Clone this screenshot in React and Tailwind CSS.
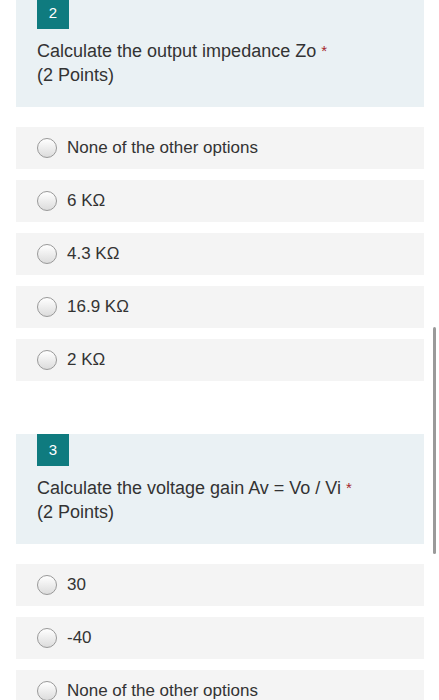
import React from 'react';

const questions = [
  {
    number: 2,
    title: 'Calculate the output impedance Zo',
    points: '(2 Points)',
    options: ['None of the other options', '6 KΩ', '4.3 KΩ', '16.9 KΩ', '2 KΩ'],
  },
  {
    number: 3,
    title: 'Calculate the voltage gain Av = Vo / Vi',
    points: '(2 Points)',
    options: ['30', '-40', 'None of the other options'],
  },
];

const Radio = () => (
  <span className="w-5 h-5 shrink-0 rounded-full border border-[#999] bg-gradient-to-b from-white to-[#dcdcdc]" />
);

const Question = ({ q }) => (
  <div>
    <div className="bg-[#eaf1f4] h-[110px] px-[21px]">
      <div className="w-8 h-8 bg-[#0f7b7f] text-white text-[15px] flex items-center justify-center">
        {q.number}
      </div>
      <div className="mt-[10px] text-[18px] leading-6 text-[#333]">
        <div>
          {q.title} <span className="text-[#a4262c] text-[15px] align-top">*</span>
        </div>
        <div>{q.points}</div>
      </div>
    </div>
    <div className="mt-5 flex flex-col gap-[11px]">
      {q.options.map((opt) => (
        <div key={opt} className="h-[42px] bg-[#f4f4f4] flex items-center gap-[10px] px-[21px]">
          <Radio />
          <span className="text-[17px] text-[#333]">{opt}</span>
        </div>
      ))}
    </div>
  </div>
);

export default function App() {
  return (
    <div
      className="relative w-[439px] h-[700px] overflow-hidden bg-white"
      style={{ fontFamily: '"Liberation Sans", Arial, sans-serif' }}
    >
      <div className="-mt-[3px] pl-4 pr-[15px] flex flex-col gap-[53px]">
        {questions.map((q) => (
          <Question key={q.number} q={q} />
        ))}
      </div>
      <div className="absolute left-[433px] top-[327px] w-[3px] h-[227px] rounded-full bg-[#9a9a9a]" />
    </div>
  );
}
